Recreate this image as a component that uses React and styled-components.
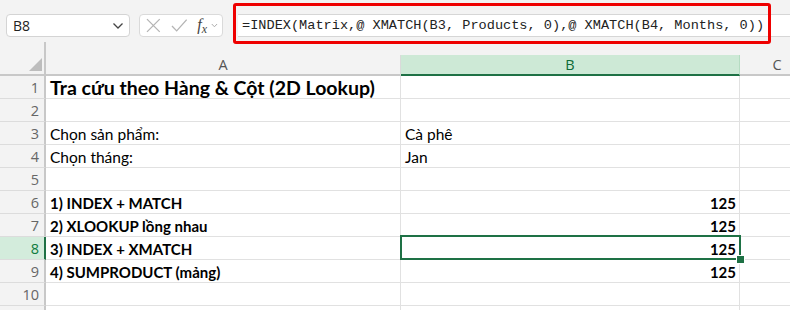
import React from 'react';
import styled, { createGlobalStyle } from 'styled-components';

const GlobalStyle = createGlobalStyle`
  body {
    margin: 0;
    background: #f3f3f3;
  }
`;

const rows = [
  { n: 1, a: 'Tra cứu theo Hàng & Cột (2D Lookup)', title: true },
  { n: 2 },
  { n: 3, a: 'Chọn sản phẩm:', b: 'Cà phê' },
  { n: 4, a: 'Chọn tháng:', b: 'Jan' },
  { n: 5 },
  { n: 6, a: '1) INDEX + MATCH', b: '125', bold: true, num: true },
  { n: 7, a: '2) XLOOKUP lồng nhau', b: '125', bold: true, num: true },
  { n: 8, a: '3) INDEX + XMATCH', b: '125', bold: true, num: true, active: true },
  { n: 9, a: '4) SUMPRODUCT (mảng)', b: '125', bold: true, num: true },
  { n: 10 },
  { n: '' },
];

const App = () => {
  return (
    <>
      <GlobalStyle />
      <Page>
        <Toolbar>
          <NameBox>
            <span>B8</span>
            <svg width="12" height="8" viewBox="0 0 12 8">
              <path d="M1.5 1.5 L6 6 L10.5 1.5" fill="none" stroke="#444" strokeWidth="1.3" />
            </svg>
          </NameBox>
          <FuncBox>
            <svg width="15" height="15" viewBox="0 0 15 15">
              <path d="M1 1 L14 14 M14 1 L1 14" stroke="#b4b4b4" strokeWidth="1.3" />
            </svg>
            <svg width="17" height="15" viewBox="0 0 17 15">
              <path d="M1 8 L5.8 13 L16 1.5" fill="none" stroke="#b4b4b4" strokeWidth="1.3" />
            </svg>
            <Fx>f<sub>x</sub></Fx>
            <svg width="7" height="5" viewBox="0 0 7 5">
              <path d="M0.8 1 L3.5 3.8 L6.2 1" fill="none" stroke="#aaa" strokeWidth="1" />
            </svg>
          </FuncBox>
          <FormulaWrap>
            <FormulaInput>=INDEX(Matrix,@ XMATCH(B3, Products, 0),@ XMATCH(B4, Months, 0))</FormulaInput>
            <Highlight />
          </FormulaWrap>
        </Toolbar>

        <Grid>
          <HeaderRow>
            <Corner>
              <svg width="13" height="13" viewBox="0 0 13 13">
                <path d="M13 0 L13 13 L0 13 Z" fill="#bdbdbd" />
              </svg>
            </Corner>
            <ColHead width="355px">A</ColHead>
            <ColHead width="339px" selected>B</ColHead>
            <ColHead width="75px">C</ColHead>
          </HeaderRow>

          {rows.map((r, i) => (
            <Row key={i}>
              <RowHead active={r.active}>{r.n}</RowHead>
              <Cell width="355px" bold={r.bold || r.title} size={r.title ? '19.5px' : r.bold ? '15px' : '15.5px'}>
                {r.a}
              </Cell>
              <Cell width="339px" bold={r.bold} size={r.bold ? '15px' : '15.5px'} align={r.num ? 'right' : 'left'}>
                {r.b}
                {r.active && (
                  <Selection>
                    <FillHandle />
                  </Selection>
                )}
              </Cell>
              <Cell width="75px" />
            </Row>
          ))}
        </Grid>
      </Page>
    </>
  );
};

const Page = styled.div`
  width: 790px;
  height: 310px;
  overflow: hidden;
  background: #f3f3f3;
  display: flex;
  flex-direction: column;
  font-family: Lato, "Noto Sans", sans-serif;
`;

const Toolbar = styled.div`
  height: 42px;
  display: flex;
  align-items: flex-start;
  padding: 14px 0 0 6px;
  box-sizing: border-box;
  gap: 9px;
  flex-shrink: 0;
`;

const NameBox = styled.div`
  width: 124px;
  height: 23px;
  flex-shrink: 0;
  box-sizing: border-box;
  background: #fff;
  border: 1px solid #d4d4d4;
  border-radius: 4px;
  display: flex;
  align-items: center;
  justify-content: space-between;
  padding: 0 5px 0 6px;
  font-family: "Open Sans", sans-serif;
  font-size: 14px;
  color: #222;
`;

const FuncBox = styled.div`
  width: 84px;
  height: 23px;
  flex-shrink: 0;
  box-sizing: border-box;
  background: #fff;
  border: 1px solid #dadada;
  border-radius: 4px;
  display: flex;
  align-items: center;
  padding: 0 4px 0 6px;
  gap: 10px;
  svg:last-child {
    margin-left: -6px;
  }
`;

const Fx = styled.span`
  font-family: "Liberation Serif", serif;
  font-style: italic;
  font-size: 16px;
  color: #444;
  line-height: 1;
  sub {
    font-size: 12px;
    vertical-align: -3px;
  }
`;

const FormulaWrap = styled.div`
  position: relative;
  flex: 1;
  min-width: 0;
  height: 23px;
  margin-left: 6px;
`;

const FormulaInput = styled.div`
  height: 23px;
  width: 600px;
  box-sizing: border-box;
  background: #fff;
  border-top: 1px solid #d6d6d6;
  border-bottom: 1px solid #d6d6d6;
  padding-left: 4px;
  font-family: "Liberation Mono", monospace;
  font-size: 13.6px;
  line-height: 21px;
  color: #222;
  white-space: nowrap;
`;

const Highlight = styled.div`
  position: absolute;
  left: -5px;
  top: -11px;
  width: 538px;
  height: 41px;
  border: 3.5px solid #ee0000;
  border-radius: 3px;
  box-sizing: border-box;
  pointer-events: none;
`;

const Grid = styled.div`
  display: flex;
  flex-direction: column;
  background: #fff;
  flex: 1;
`;

const HeaderRow = styled.div`
  display: flex;
  height: 34px;
  background: #f3f3f3;
  flex-shrink: 0;
`;

const Corner = styled.div`
  width: 46px;
  box-sizing: border-box;
  border-right: 2px solid #c8c8c8;
  border-bottom: 2px solid #c8c8c8;
  display: flex;
  align-items: flex-end;
  justify-content: flex-end;
  padding: 0 2px 3px 0;
  flex-shrink: 0;
`;

const ColHead = styled.div`
  width: ${(p) => p.width};
  flex-shrink: 0;
  margin-top: 13px;
  box-sizing: border-box;
  display: flex;
  align-items: center;
  justify-content: center;
  font-family: "Open Sans", sans-serif;
  font-size: 14.5px;
  color: ${(p) => (p.selected ? '#0e6b38' : '#555')};
  background: ${(p) => (p.selected ? '#cde9d6' : '#f3f3f3')};
  border-right: 1px solid ${(p) => (p.selected ? '#b5dcc2' : '#dadada')};
  border-bottom: 2px solid ${(p) => (p.selected ? '#1e7145' : '#c8c8c8')};
`;

const Row = styled.div`
  display: flex;
  height: 23px;
  flex-shrink: 0;
`;

const RowHead = styled.div`
  width: 46px;
  flex-shrink: 0;
  box-sizing: border-box;
  background: ${(p) => (p.active ? '#d3ecdc' : '#f3f3f3')};
  color: ${(p) => (p.active ? '#107c41' : '#666')};
  border-right: 2px solid ${(p) => (p.active ? '#1e7145' : '#c8c8c8')};
  border-bottom: 1px solid #dcdcdc;
  display: flex;
  align-items: center;
  justify-content: flex-end;
  padding-right: 5px;
  font-family: "Open Sans", sans-serif;
  font-size: 14.5px;
`;

const Cell = styled.div`
  position: relative;
  width: ${(p) => p.width};
  flex-shrink: 0;
  box-sizing: border-box;
  border-right: 1px solid #e1e1e1;
  border-bottom: 1px solid #e1e1e1;
  display: flex;
  align-items: center;
  justify-content: ${(p) => (p.align === 'right' ? 'flex-end' : 'flex-start')};
  padding: 1px 3px 0 4px;
  font-size: ${(p) => p.size || '15.5px'};
  font-weight: ${(p) => (p.bold ? 700 : 400)};
  color: #000;
  white-space: nowrap;
`;

const Selection = styled.div`
  position: absolute;
  z-index: 5;
  left: -1px;
  top: -2px;
  right: -2px;
  bottom: -1px;
  border: 2px solid #1e7145;
  pointer-events: none;
`;

const FillHandle = styled.div`
  position: absolute;
  right: -6px;
  bottom: -6px;
  width: 7px;
  height: 7px;
  background: #1e7145;
  border: 1px solid #fff;
`;

export default App;
